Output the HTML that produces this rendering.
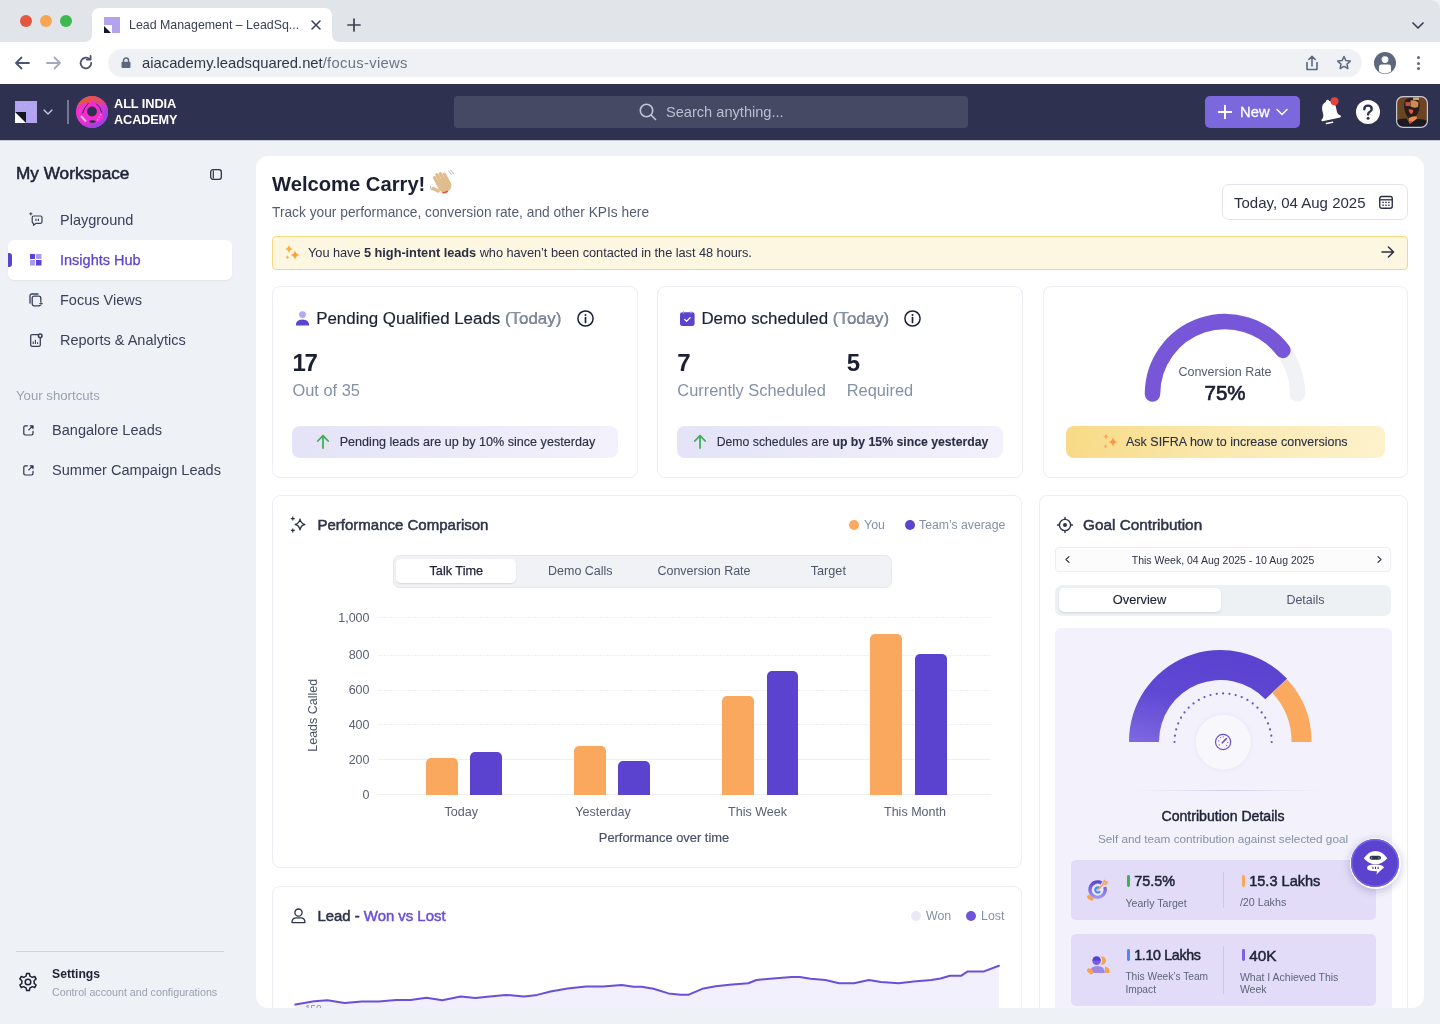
<!DOCTYPE html>
<html><head><meta charset="utf-8">
<style>
*{box-sizing:border-box;margin:0;padding:0}
html,body{width:1440px;height:1024px;overflow:hidden;background:#eef1f5;font-family:"Liberation Sans",sans-serif;color:#1e2235}
.a{position:absolute}
.t{position:absolute;white-space:nowrap;line-height:1}
svg{position:absolute;overflow:visible}
b{font-weight:700}
</style></head><body><div style="position:absolute;left:0;top:0;width:1440px;height:1024px;overflow:hidden;will-change:transform;background:#eef1f5">
<div class="a" style="left:0px;top:0px;width:1440px;height:42px;background:#e1e5ea;border-top-right-radius:9px"></div>
<div class="a" style="left:20px;top:15px;width:12px;height:12px;background:#e4563f;border-radius:50%"></div>
<div class="a" style="left:40px;top:15px;width:12px;height:12px;background:#f6a552;border-radius:50%"></div>
<div class="a" style="left:60px;top:15px;width:12px;height:12px;background:#3eb94f;border-radius:50%"></div>
<svg style="left:84px;top:8px;" width="256" height="34" viewBox="0 0 256 34"><path d="M0 34 Q8 34 8 26 L8 8 Q8 0 16 0 L240 0 Q248 0 248 8 L248 26 Q248 34 256 34 Z" fill="#fff"/></svg>
<svg style="left:104px;top:17px;" width="16" height="16" viewBox="0 0 16 16"><rect x="0" y="0" width="16" height="16" fill="#b3a3ee"/><rect x="0" y="8" width="8" height="8" fill="#fff"/><path d="M0 9 L0 16 L7 16 Z" fill="#141625"/></svg>
<div class="t" style="left:129.0px;top:18.8px;font-size:12.4px;font-weight:400;color:#3b4256;">Lead Management – LeadSq...</div>
<svg style="left:311px;top:20px;" width="10" height="10" viewBox="0 0 10 10"><path d="M1 1 L9 9 M9 1 L1 9" stroke="#3b4256" stroke-width="1.6" stroke-linecap="round"/></svg>
<svg style="left:347px;top:18px;" width="14" height="14" viewBox="0 0 14 14"><path d="M7 1 V13 M1 7 H13" stroke="#3b4256" stroke-width="1.7" stroke-linecap="round"/></svg>
<svg style="left:1412px;top:22px;" width="12" height="8" viewBox="0 0 12 8"><path d="M1 1 L6 6 L11 1" stroke="#3b4256" stroke-width="1.7" fill="none" stroke-linecap="round" stroke-linejoin="round"/></svg>
<div class="a" style="left:0px;top:42px;width:1440px;height:42px;background:#fff"></div>
<svg style="left:14px;top:56px;" width="16" height="14" viewBox="0 0 16 14"><path d="M15 7 H2 M7.5 1.5 L2 7 L7.5 12.5" stroke="#4b5670" stroke-width="1.8" fill="none" stroke-linecap="round" stroke-linejoin="round"/></svg>
<svg style="left:46px;top:56px;" width="16" height="14" viewBox="0 0 16 14"><path d="M1 7 H14 M8.5 1.5 L14 7 L8.5 12.5" stroke="#a3abba" stroke-width="1.8" fill="none" stroke-linecap="round" stroke-linejoin="round"/></svg>
<svg style="left:79px;top:56px;" width="14" height="14" viewBox="0 0 14 14"><path d="M12.2 7 A5.3 5.3 0 1 1 10.6 3.2" stroke="#4b5670" stroke-width="1.8" fill="none" stroke-linecap="round"/><path d="M7.8 3.6 H11.6 V-0.2" stroke="#4b5670" stroke-width="1.8" fill="none" stroke-linecap="round" stroke-linejoin="round"/></svg>
<div class="a" style="left:108px;top:49px;width:1254px;height:28px;background:#eff1f4;border-radius:14px"></div>
<svg style="left:121px;top:57px;" width="10" height="11" viewBox="0 0 10 11"><path d="M2.5 5 V3.5 A2.5 2.5 0 0 1 7.5 3.5 V5" stroke="#5d6880" stroke-width="1.5" fill="none"/><rect x="0.5" y="4.8" width="9" height="6.2" rx="1" fill="#5d6880"/></svg>
<div class="t" style="left:142.0px;top:56.1px;font-size:14.8px;font-weight:400;color:#2f3548;">aiacademy.leadsquared.net<span style="color:#6b7488;letter-spacing:0.3px">/focus-views</span></div>
<svg style="left:1305px;top:55px;" width="14" height="16" viewBox="0 0 14 16"><path d="M7 11 V1.5 M3.8 4.5 L7 1.3 L10.2 4.5" stroke="#5d6880" stroke-width="1.6" fill="none" stroke-linecap="round" stroke-linejoin="round"/><path d="M2 7.5 V14.5 H12 V7.5" stroke="#5d6880" stroke-width="1.6" fill="none" stroke-linecap="round" stroke-linejoin="round"/></svg>
<svg style="left:1336px;top:55px;" width="16" height="16" viewBox="0 0 16 16"><path d="M8 1.5 L9.9 5.6 L14.3 6.1 L11 9.1 L11.9 13.5 L8 11.3 L4.1 13.5 L5 9.1 L1.7 6.1 L6.1 5.6 Z" stroke="#5d6880" stroke-width="1.5" fill="none" stroke-linejoin="round"/></svg>
<svg style="left:1374px;top:52px;" width="22" height="22" viewBox="0 0 22 22"><circle cx="11" cy="11" r="11" fill="#5d6880"/><circle cx="11" cy="7.6" r="3.4" fill="#fff"/><path d="M5 19.5 V15 Q5 12.5 7.5 12.5 H14.5 Q17 12.5 17 15 V19.5 Q14 21.6 11 21.6 Q8 21.6 5 19.5Z" fill="#fff"/></svg>
<div class="a" style="left:1416.5px;top:56.0px;width:3px;height:3px;background:#5d6880;border-radius:50%"></div>
<div class="a" style="left:1416.5px;top:61.5px;width:3px;height:3px;background:#5d6880;border-radius:50%"></div>
<div class="a" style="left:1416.5px;top:67.0px;width:3px;height:3px;background:#5d6880;border-radius:50%"></div>
<div class="a" style="left:0px;top:84px;width:1440px;height:56px;background:#2f3150"></div>
<svg style="left:15px;top:101px;" width="22" height="22" viewBox="0 0 22 22"><rect x="0" y="0" width="22" height="22" fill="#b3a4ef"/><g fill="#d6ccff" opacity=".7"><circle cx="5" cy="4" r=".5"/><circle cx="10" cy="4" r=".5"/><circle cx="16" cy="6" r=".5"/><circle cx="18" cy="12" r=".5"/></g><rect x="0" y="11" width="11" height="11" fill="#fff"/><path d="M0 11 H11 V22 Z" fill="#141625"/></svg>
<svg style="left:43px;top:109px;" width="10" height="6" viewBox="0 0 10 6"><path d="M1 1 L5 5 L9 1" stroke="#c9cce0" stroke-width="1.3" fill="none" stroke-linecap="round" stroke-linejoin="round"/></svg>
<div class="a" style="left:67px;top:100px;width:2px;height:24px;background:#74778f"></div>
<svg style="left:76px;top:96px;" width="32" height="32" viewBox="0 0 32 32"><defs><clipPath id="lc"><circle cx="16" cy="16" r="16"/></clipPath><linearGradient id="lp" x1="0" y1="0" x2="1" y2="1"><stop offset=".3" stop-color="#f22fcf" stop-opacity="0"/><stop offset=".75" stop-color="#a23fe0"/><stop offset="1" stop-color="#7a4ef0"/></linearGradient></defs>
<g clip-path="url(#lc)"><rect width="32" height="32" fill="#f22fcf"/><path d="M0 0 H32 V11 Q24 6 16 7.5 Q8 6 0 11Z" fill="#e1564a"/><rect width="32" height="32" fill="url(#lp)"/>
<path d="M4 22 Q10 8 16 4 Q22 8 28 22 Q22 28 16 26 Q10 28 4 22Z" fill="#f52bd0"/></g>
<path d="M6.3 17.5 Q8.5 11 12.5 7" stroke="#2f3150" stroke-width="1" fill="none"/><path d="M20 7.5 Q24.3 10.5 25.7 16.5" stroke="#2f3150" stroke-width="1" fill="none"/>
<circle cx="16" cy="15.5" r="4.9" fill="#2f3150"/><ellipse cx="16.5" cy="25.6" rx="3.2" ry="1.3" fill="#2f3150"/>
<path d="M5 20 L10 25.5" stroke="#d5d8ee" stroke-width="2" opacity=".8"/><path d="M25 18 L21 25" stroke="#d5d8ee" stroke-width="1.4" opacity=".6" stroke-dasharray="1.5 1.5"/></svg>
<div class="t" style="left:114.0px;top:97.9px;font-size:12.8px;font-weight:700;color:#ffffff;letter-spacing:-0.1px">ALL INDIA</div>
<div class="t" style="left:114.0px;top:114.0px;font-size:12.7px;font-weight:700;color:#ffffff;letter-spacing:-0.1px">ACADEMY</div>
<div class="a" style="left:454px;top:96px;width:514px;height:32px;background:#464963;border-radius:4px"></div>
<svg style="left:639px;top:103px;" width="18" height="18" viewBox="0 0 18 18"><circle cx="7.5" cy="7.5" r="6.2" stroke="#c3c6d6" stroke-width="1.6" fill="none"/><path d="M12 12 L16.5 16.5" stroke="#c3c6d6" stroke-width="1.6" stroke-linecap="round"/></svg>
<div class="t" style="left:666.0px;top:105.0px;font-size:14.6px;font-weight:400;color:#bcbfcf;">Search anything...</div>
<div class="a" style="left:1205px;top:96px;width:95px;height:32px;background:#7b68dd;border-radius:5px"></div>
<svg style="left:1218px;top:105px;" width="14" height="14" viewBox="0 0 14 14"><path d="M7 0.8 V13.2 M0.8 7 H13.2" stroke="#fff" stroke-width="1.9" stroke-linecap="round"/></svg>
<div class="t" style="left:1240.0px;top:105.1px;font-size:14.8px;font-weight:400;color:#ffffff;-webkit-text-stroke:0.3px #fff">New</div>
<svg style="left:1276px;top:108px;" width="12" height="8" viewBox="0 0 12 8"><path d="M1 1.5 L6 6.5 L11 1.5" stroke="#fff" stroke-width="1.5" fill="none" stroke-linecap="round" stroke-linejoin="round"/></svg>
<svg style="left:1317px;top:98px;" width="26" height="28" viewBox="0 0 26 28"><path d="M11 3.2 Q11 1.6 12.6 1.6 Q14.2 1.6 14.2 3.2 Q19.5 4.6 19.6 10.5 V15.8 Q19.8 18.2 22.4 19.8 Q23 21.4 21.6 21.6 L3.6 21.6 Q2.2 21.4 2.8 19.8 Q5.4 18.2 5.6 15.8 V10.5 Q5.7 4.6 11 3.2 Z" fill="#fff" transform="rotate(-12 12.6 13)"/><path d="M9.5 25.5 L15.5 24.3" stroke="#fff" stroke-width="1.6" stroke-linecap="round"/><circle cx="17.5" cy="3.3" r="4" fill="#e0453b"/></svg>
<svg style="left:1356px;top:100px;" width="24" height="24" viewBox="0 0 24 24"><circle cx="12" cy="12" r="12" fill="#fff"/><path d="M8.3 9.2 Q8.3 5.6 12 5.6 Q15.7 5.6 15.7 8.9 Q15.7 11 13.5 12 Q12.1 12.7 12.1 14.4" stroke="#2f3150" stroke-width="2.4" fill="none" stroke-linecap="round"/><circle cx="12.1" cy="18.2" r="1.5" fill="#2f3150"/></svg>
<svg style="left:1396px;top:96px;" width="32" height="32" viewBox="0 0 32 32"><defs><clipPath id="av"><rect x="0" y="0" width="32" height="32" rx="6.5"/></clipPath></defs>
<g clip-path="url(#av)"><rect width="32" height="32" fill="#6b4422"/>
<path d="M8 8 Q9 1.5 15 1.5 Q22 1.5 23.5 7 Q24 14 21 19 L16 24 Q11 22 9.5 17 Q7.5 12 8 8Z" fill="#2a1c18"/>
<path d="M9.5 6 H14 V10 H9.5Z" fill="#d9504a" opacity=".85"/><path d="M14.5 4.5 Q19 3.5 22.5 6.5 L22 11 Q18 12.5 14.5 10.5Z" fill="#eaa05c" opacity=".85"/><path d="M17 1.5 H23 V4 H17Z" fill="#f1c070" opacity=".8"/>
<path d="M12.5 13.5 Q15 12.5 17.5 14.5 L16 18 Q13.5 18 12.5 13.5Z" fill="#de5a43"/>
<path d="M13 22 Q17 19.5 21 20.5 L20.5 25 Q17 28 12.5 27.5Z" fill="#e98e4c"/><path d="M12.5 25 Q15 24 17 26 L14 28Z" fill="#e04b3f"/>
<path d="M0 32 V24.5 Q5 22 10.5 22.5 L14 28 L20.5 23 Q27 22.5 32 25 V32 Z" fill="#1b1a22"/></g>
<rect x=".6" y=".6" width="30.8" height="30.8" rx="6.5" fill="none" stroke="#c6c9d9" stroke-width="1.2"/></svg>
<div class="a" style="left:0px;top:140px;width:1440px;height:1px;background:#c5c9d3"></div>
<div class="t" style="left:16.0px;top:164.9px;font-size:17.2px;font-weight:400;color:#1e2235;-webkit-text-stroke:0.55px #1e2235">My Workspace</div>
<svg style="left:210px;top:168.5px;" width="12" height="11" viewBox="0 0 12 11"><rect x="0.7" y="0.7" width="10.6" height="9.6" rx="2.2" stroke="#2d3348" stroke-width="1.3" fill="none"/><path d="M3.3 1.5 V9.5" stroke="#2d3348" stroke-width="1.2"/></svg>
<div class="a" style="left:8px;top:240px;width:224px;height:40px;background:#fff;border-radius:6px;box-shadow:0 1px 2px rgba(20,30,60,.06)"></div>
<div class="a" style="left:8px;top:253px;width:4px;height:14px;background:#5b43d0;border-radius:0 3px 3px 0"></div>
<svg style="left:29px;top:212px;" width="14" height="14" viewBox="0 0 14 14"><path d="M3.2 5.5 Q3.2 4 4.7 4 H11.6 Q13 4 13 5.5 V9.8 Q13 11.3 11.6 11.3 H7.2 L4.5 13.3 V11.3 Q3.2 11.1 3.2 9.8 Z" stroke="#3a4159" stroke-width="1.2" fill="none" stroke-linejoin="round"/><path d="M7 7 V8.4 M9.4 7 V8.4" stroke="#3a4159" stroke-width="1.2" stroke-linecap="round"/><path d="M1.8 0.3 V3.3 M0.3 1.8 H3.3" stroke="#3a4159" stroke-width="1"/></svg>
<svg style="left:30px;top:254px;" width="12" height="12" viewBox="0 0 12 12"><rect x="0" y="0" width="5" height="5" fill="#5b43d0"/><rect x="6" y="0" width="5.5" height="5" fill="#a99bf0"/><rect x="0" y="6" width="5" height="5.5" fill="#a99bf0"/><rect x="6" y="6" width="5.5" height="5.5" fill="#5b43d0"/></svg>
<svg style="left:29px;top:293px;" width="14" height="14" viewBox="0 0 14 14"><rect x="3.2" y="3.2" width="8.6" height="9.6" rx="2" stroke="#3a4159" stroke-width="1.3" fill="none"/><path d="M1 10 V3 Q1 1 3 1 H9" stroke="#3a4159" stroke-width="1.3" fill="none" stroke-linecap="round"/><circle cx="12" cy="10.5" r="1.8" fill="#eef1f5"/><path d="M12 8.8 V12.2 M10.3 10.5 H13.7" stroke="#3a4159" stroke-width=".9"/></svg>
<svg style="left:30px;top:333px;" width="13" height="14" viewBox="0 0 13 14"><rect x="0.7" y="1.7" width="9.6" height="11.6" rx="1.4" stroke="#3a4159" stroke-width="1.3" fill="none"/><path d="M3.2 11 V8.4 M5.4 11 V6.8 M7.6 11 V9.2" stroke="#3a4159" stroke-width="1.1"/><circle cx="10.2" cy="2.8" r="2.6" fill="#3a4159"/><circle cx="10.2" cy="2.8" r="1.1" fill="#eef1f5"/></svg>
<div class="t" style="left:60.0px;top:213.2px;font-size:14.5px;font-weight:400;color:#3a4159;">Playground</div>
<div class="t" style="left:60.0px;top:253.2px;font-size:14.5px;font-weight:400;color:#5b43d0;-webkit-text-stroke:0.25px #5b43d0">Insights Hub</div>
<div class="t" style="left:60.0px;top:293.2px;font-size:14.5px;font-weight:400;color:#3a4159;">Focus Views</div>
<div class="t" style="left:60.0px;top:333.2px;font-size:14.5px;font-weight:400;color:#3a4159;">Reports &amp; Analytics</div>
<div class="t" style="left:16.0px;top:388.9px;font-size:13.2px;font-weight:400;color:#9aa1b1;">Your shortcuts</div>
<svg style="left:23px;top:425px;" width="11" height="11" viewBox="0 0 11 11"><path d="M4.4 0.8 H2.2 Q0.8 0.8 0.8 2.2 V8.6 Q0.8 10 2.2 10 H8.6 Q10 10 10 8.6 V6.4" stroke="#2d3348" stroke-width="1.2" fill="none" stroke-linecap="round"/><path d="M5.8 4.9 L9.8 0.9 M7.2 0.8 H10 V3.6" stroke="#2d3348" stroke-width="1.2" fill="none" stroke-linecap="round" stroke-linejoin="round"/></svg>
<svg style="left:23px;top:465px;" width="11" height="11" viewBox="0 0 11 11"><path d="M4.4 0.8 H2.2 Q0.8 0.8 0.8 2.2 V8.6 Q0.8 10 2.2 10 H8.6 Q10 10 10 8.6 V6.4" stroke="#2d3348" stroke-width="1.2" fill="none" stroke-linecap="round"/><path d="M5.8 4.9 L9.8 0.9 M7.2 0.8 H10 V3.6" stroke="#2d3348" stroke-width="1.2" fill="none" stroke-linecap="round" stroke-linejoin="round"/></svg>
<div class="t" style="left:52.0px;top:423.2px;font-size:14.55px;font-weight:400;color:#3a4159;">Bangalore Leads</div>
<div class="t" style="left:52.0px;top:463.2px;font-size:14.55px;font-weight:400;color:#3a4159;">Summer Campaign Leads</div>
<div class="a" style="left:16px;top:951px;width:208px;height:1px;background:#cfd3dc"></div>
<svg style="left:18px;top:972px;" width="20" height="20" viewBox="0 0 20 20"><path d="M8.6 1.5 H11.4 L11.9 4.1 Q13.2 4.6 14.2 5.4 L16.7 4.5 L18.1 6.9 L16.1 8.7 Q16.3 10 16.1 11.3 L18.1 13.1 L16.7 15.5 L14.2 14.6 Q13.2 15.4 11.9 15.9 L11.4 18.5 H8.6 L8.1 15.9 Q6.8 15.4 5.8 14.6 L3.3 15.5 L1.9 13.1 L3.9 11.3 Q3.7 10 3.9 8.7 L1.9 6.9 L3.3 4.5 L5.8 5.4 Q6.8 4.6 8.1 4.1 Z" stroke="#1e2235" stroke-width="1.5" fill="none" stroke-linejoin="round"/><circle cx="10" cy="10" r="2.8" stroke="#1e2235" stroke-width="1.5" fill="none"/></svg>
<div class="t" style="left:52.0px;top:967.9px;font-size:12.2px;font-weight:700;color:#1e2235;">Settings</div>
<div class="t" style="left:52.0px;top:987.1px;font-size:10.7px;font-weight:400;color:#9aa1b1;">Control account and configurations</div>
<div class="a" style="left:0;top:0;width:1440px;height:1008px;overflow:hidden">
<div class="a" style="left:256px;top:156px;width:1168px;height:852px;background:#fff;border-radius:12px"></div>
<div class="t" style="left:272.0px;top:173.7px;font-size:20.2px;font-weight:700;color:#1a1f33;">Welcome Carry!</div>
<svg style="left:429px;top:170px;" width="26" height="26" viewBox="0 0 26 26"><g transform="rotate(-28 13 13)" fill="#dfbd8c">
<rect x="7.2" y="3.2" width="3.4" height="11" rx="1.7"/><rect x="10.7" y="1.6" width="3.4" height="12" rx="1.7"/><rect x="14.2" y="2.4" width="3.4" height="11.5" rx="1.7"/><rect x="17.6" y="4.6" width="3.2" height="10" rx="1.6"/>
<rect x="7.2" y="9" width="13.6" height="14" rx="6"/><rect x="2.6" y="11.5" width="3.4" height="9" rx="1.7" transform="rotate(-35 4.3 16)"/></g>
<path d="M14 22.6 Q16.5 23 18.3 21.4" stroke="#e2533d" stroke-width="1.6" fill="none" stroke-linecap="round"/>
<path d="M19.5 1.2 Q21.6 2.2 22.2 4.4 M21.4 0.2 Q24 1.6 24.6 4" stroke="#9aa3b8" stroke-width=".8" fill="none"/><path d="M1.2 16 Q1.4 18.6 3.2 20.2" stroke="#9aa3b8" stroke-width=".8" fill="none"/></svg>
<div class="t" style="left:272.0px;top:205.6px;font-size:13.75px;font-weight:400;color:#535d72;">Track your performance, conversion rate, and other KPIs here</div>
<div class="a" style="left:1222px;top:184px;width:186px;height:36px;border:1px solid #e1e4ea;border-radius:7px;background:#fff"></div>
<div class="t" style="left:1234.0px;top:195.0px;font-size:15px;font-weight:400;color:#2a2f45;">Today, 04 Aug 2025</div>
<svg style="left:1379px;top:195px;" width="14" height="14" viewBox="0 0 14 14"><rect x="0.75" y="1.5" width="12.5" height="11.75" rx="2" stroke="#2a2f45" stroke-width="1.4" fill="none"/><path d="M1 4.8 H13" stroke="#2a2f45" stroke-width="1.3"/><g fill="#2a2f45"><rect x="3.4" y="6.7" width="1.4" height="1.4"/><rect x="6.3" y="6.7" width="1.4" height="1.4"/><rect x="9.2" y="6.7" width="1.4" height="1.4"/><rect x="3.4" y="9.5" width="1.4" height="1.4"/><rect x="6.3" y="9.5" width="1.4" height="1.4"/><rect x="9.2" y="9.5" width="1.4" height="1.4"/></g></svg>
<div class="a" style="left:272px;top:236px;width:1136px;height:34px;background:#fdf6e1;border:1px solid #f4d87f;border-radius:4px"></div>
<svg style="left:283px;top:243px;" width="18" height="18" viewBox="0 0 18 18"><path d="M6 1.5 Q6.6 5.2 10 6 Q6.6 6.8 6 10.5 Q5.4 6.8 2 6 Q5.4 5.2 6 1.5Z" fill="#f7b23b"/><path d="M12 7 Q12.7 11.3 16.8 12 Q12.7 12.7 12 17 Q11.3 12.7 7.2 12 Q11.3 11.3 12 7Z" fill="#f9a33a"/><path d="M4.5 12 Q4.8 13.9 6.5 14.2 Q4.8 14.5 4.5 16.4 Q4.2 14.5 2.5 14.2 Q4.2 13.9 4.5 12Z" fill="#f9b548"/></svg>
<div class="t" style="left:308.0px;top:247.0px;font-size:12.8px;font-weight:400;color:#2a2f45;letter-spacing:-0.05px">You have <b>5 high-intent leads</b> who haven’t been contacted in the last 48 hours.</div>
<svg style="left:1381px;top:246px;" width="14" height="12" viewBox="0 0 14 12"><path d="M1 6 H12.5 M7.5 1 L12.5 6 L7.5 11" stroke="#2a2f45" stroke-width="1.5" fill="none" stroke-linecap="round" stroke-linejoin="round"/></svg>
<div class="a" style="left:272px;top:286px;width:365.5px;height:191.5px;border:1px solid #eceef3;border-radius:8px;background:#fff"></div>
<div class="a" style="left:657.2px;top:286px;width:365.5px;height:191.5px;border:1px solid #eceef3;border-radius:8px;background:#fff"></div>
<div class="a" style="left:1042.5px;top:286px;width:365.5px;height:191.5px;border:1px solid #eceef3;border-radius:8px;background:#fff"></div>
<svg style="left:295px;top:311px;" width="15" height="15" viewBox="0 0 15 15"><circle cx="7.5" cy="3.6" r="3.4" fill="#b5a8f1"/><path d="M0.8 14.6 Q0.8 8.4 7.5 8.4 Q14.2 8.4 14.2 14.6 Z" fill="#5b43d0"/></svg>
<div class="t" style="left:316.2px;top:310.8px;font-size:16.9px;font-weight:400;color:#1e2235;-webkit-text-stroke:0.2px #1e2235">Pending Qualified Leads <span style="color:#8391a7">(Today)</span></div>
<svg style="left:576.5px;top:309.5px;" width="17" height="17" viewBox="0 0 17 17"><circle cx="8.5" cy="8.5" r="7.6" stroke="#1e2235" stroke-width="1.5" fill="none"/><path d="M8.5 7.6 V12.4" stroke="#1e2235" stroke-width="1.7" stroke-linecap="round"/><circle cx="8.5" cy="5" r="1" fill="#1e2235"/></svg>
<div class="t" style="left:292.5px;top:350.5px;font-size:24px;font-weight:700;color:#1a1f33;letter-spacing:-1.4px">17</div>
<div class="t" style="left:292.5px;top:382.1px;font-size:16.4px;font-weight:400;color:#8391a7;">Out of 35</div>
<div class="a" style="left:292px;top:426px;width:326px;height:32px;background:linear-gradient(90deg,#e4e3f7,#f3f1fc);border-radius:8px"></div>
<svg style="left:316px;top:434px;" width="14" height="15" viewBox="0 0 14 15"><path d="M7 14 V2 M1.8 7 L7 1.6 L12.2 7" stroke="#3fae5c" stroke-width="1.8" fill="none" stroke-linecap="round" stroke-linejoin="round"/></svg>
<div class="t" style="left:339.7px;top:435.5px;font-size:12.6px;font-weight:400;color:#2a2f45;-webkit-text-stroke:0.15px #2a2f45">Pending leads are up by 10% since yesterday</div>
<svg style="left:680px;top:311px;" width="15" height="15" viewBox="0 0 15 15"><rect x="0" y="1.2" width="14.6" height="13.8" rx="2.2" fill="#5b43d0"/><path d="M3.5 0.3 V2.5 M11 0.3 V2.5" stroke="#a99bf0" stroke-width="1.2"/><path d="M4.6 8.4 L6.6 10.3 L10.2 6.6" stroke="#fff" stroke-width="1.3" fill="none" stroke-linecap="round" stroke-linejoin="round"/></svg>
<div class="t" style="left:701.4px;top:310.8px;font-size:16.9px;font-weight:400;color:#1e2235;-webkit-text-stroke:0.2px #1e2235">Demo scheduled <span style="color:#8391a7">(Today)</span></div>
<svg style="left:904px;top:309.5px;" width="17" height="17" viewBox="0 0 17 17"><circle cx="8.5" cy="8.5" r="7.6" stroke="#1e2235" stroke-width="1.5" fill="none"/><path d="M8.5 7.6 V12.4" stroke="#1e2235" stroke-width="1.7" stroke-linecap="round"/><circle cx="8.5" cy="5" r="1" fill="#1e2235"/></svg>
<div class="t" style="left:677.3px;top:350.5px;font-size:24px;font-weight:700;color:#1a1f33;">7</div>
<div class="t" style="left:846.7px;top:350.5px;font-size:24px;font-weight:700;color:#1a1f33;">5</div>
<div class="t" style="left:677.3px;top:382.1px;font-size:16.4px;font-weight:400;color:#8391a7;">Currently Scheduled</div>
<div class="t" style="left:846.7px;top:382.1px;font-size:16.4px;font-weight:400;color:#8391a7;">Required</div>
<div class="a" style="left:677px;top:426px;width:326px;height:32px;background:linear-gradient(90deg,#e4e3f7,#f3f1fc);border-radius:8px"></div>
<svg style="left:693px;top:434px;" width="14" height="15" viewBox="0 0 14 15"><path d="M7 14 V2 M1.8 7 L7 1.6 L12.2 7" stroke="#3fae5c" stroke-width="1.8" fill="none" stroke-linecap="round" stroke-linejoin="round"/></svg>
<div class="t" style="left:716.7px;top:435.7px;font-size:12.25px;font-weight:400;color:#2a2f45;-webkit-text-stroke:0.1px #2a2f45">Demo schedules are <b>up by 15% since yesterday</b></div>
<svg style="left:1140px;top:306px;" width="170" height="100" viewBox="0 0 170 100"><path d="M12.5 88 A72.5 72.5 0 0 1 157.5 88" stroke="#f1f2f4" stroke-width="15.5" fill="none" stroke-linecap="round"/><path d="M12.5 88 A72.5 72.5 0 0 1 142.9 44.4" stroke="#7856d8" stroke-width="15.5" fill="none" stroke-linecap="round"/></svg>
<div class="t" style="left:925.0px;width:600px;text-align:center;top:365.8px;font-size:12.5px;font-weight:400;color:#555e72;">Conversion Rate</div>
<div class="t" style="left:925.0px;width:600px;text-align:center;top:383.1px;font-size:20.5px;font-weight:400;color:#1a1f33;-webkit-text-stroke:0.7px #1a1f33">75%</div>
<div class="a" style="left:1066px;top:426px;width:319px;height:32px;background:linear-gradient(100deg,#f7da85 0%,#fbe9b0 50%,#fdf2cd 100%);border-radius:8px"></div>
<svg style="left:1101px;top:432px;" width="18" height="18" viewBox="0 0 18 18"><path d="M12 5 Q12.7 9.3 16.8 10 Q12.7 10.7 12 15 Q11.3 10.7 7.2 10 Q11.3 9.3 12 5Z" fill="#f59a4a"/><path d="M5 1.5 Q5.4 4.2 8 4.6 Q5.4 5 5 7.7 Q4.6 5 2 4.6 Q4.6 4.2 5 1.5Z" fill="#f8ab5c"/><path d="M4.5 12 Q4.8 13.9 6.5 14.2 Q4.8 14.5 4.5 16.4 Q4.2 14.5 2.5 14.2 Q4.2 13.9 4.5 12Z" fill="#f8ab5c"/></svg>
<div class="t" style="left:1126.0px;top:435.6px;font-size:12.5px;font-weight:400;color:#2a2f45;-webkit-text-stroke:0.1px #2a2f45">Ask SIFRA how to increase conversions</div>
<div class="a" style="left:272px;top:495px;width:750px;height:373px;border:1px solid #eceef3;border-radius:8px;background:#fff"></div>
<svg style="left:290px;top:516px;" width="17" height="17" viewBox="0 0 17 17"><path d="M10 3.2 Q10.8 7.6 14.8 8.5 Q10.8 9.4 10 13.8 Q9.2 9.4 5.2 8.5 Q9.2 7.6 10 3.2Z" stroke="#2d3348" stroke-width="1.3" fill="none" stroke-linejoin="round"/><path d="M2.8 0.6 V4.6 M0.8 2.6 H4.8 M2.8 12.4 V16.4 M0.8 14.4 H4.8" stroke="#2d3348" stroke-width="1.2"/></svg>
<div class="t" style="left:317.5px;top:516.9px;font-size:15px;font-weight:400;color:#2d3348;-webkit-text-stroke:0.5px #2d3348">Performance Comparison</div>
<div class="a" style="left:849px;top:519.5px;width:10px;height:10px;background:#fba85f;border-radius:50%"></div>
<div class="t" style="left:864.0px;top:518.8px;font-size:12.4px;font-weight:400;color:#8391a7;">You</div>
<div class="a" style="left:904.5px;top:519.5px;width:10px;height:10px;background:#5b43d0;border-radius:50%"></div>
<div class="t" style="left:919.0px;top:518.9px;font-size:12.25px;font-weight:400;color:#8391a7;">Team’s average</div>
<div class="a" style="left:393px;top:555px;width:499px;height:33px;background:#f0f2f5;border:1px solid #e4e7ec;border-radius:7px"></div>
<div class="a" style="left:396.3px;top:558.5px;width:120.2px;height:24.6px;background:#fff;border-radius:5px;box-shadow:0 1px 1.5px rgba(20,30,60,.12)"></div>
<div class="t" style="left:156.3px;width:600px;text-align:center;top:565.1px;font-size:12.7px;font-weight:400;color:#1e2235;-webkit-text-stroke:0.25px #1e2235">Talk Time</div>
<div class="t" style="left:280.3px;width:600px;text-align:center;top:565.2px;font-size:12.5px;font-weight:400;color:#4d566b;">Demo Calls</div>
<div class="t" style="left:404.0px;width:600px;text-align:center;top:565.2px;font-size:12.5px;font-weight:400;color:#4d566b;">Conversion Rate</div>
<div class="t" style="left:528.3px;width:600px;text-align:center;top:565.1px;font-size:12.7px;font-weight:400;color:#4d566b;">Target</div>
<div class="a" style="left:378px;top:617.4px;width:613px;height:1px;background:repeating-linear-gradient(90deg,#eceef2 0 2px,transparent 2px 3px)"></div>
<div class="t" style="left:-230.5px;width:600px;text-align:right;top:612.0px;font-size:12.5px;font-weight:400;color:#596174;">1,000</div>
<div class="a" style="left:378px;top:654.8px;width:613px;height:1px;background:repeating-linear-gradient(90deg,#eceef2 0 2px,transparent 2px 3px)"></div>
<div class="t" style="left:-230.5px;width:600px;text-align:right;top:649.4px;font-size:12.5px;font-weight:400;color:#596174;">800</div>
<div class="a" style="left:378px;top:689.6px;width:613px;height:1px;background:repeating-linear-gradient(90deg,#eceef2 0 2px,transparent 2px 3px)"></div>
<div class="t" style="left:-230.5px;width:600px;text-align:right;top:684.2px;font-size:12.5px;font-weight:400;color:#596174;">600</div>
<div class="a" style="left:378px;top:724.2px;width:613px;height:1px;background:repeating-linear-gradient(90deg,#eceef2 0 2px,transparent 2px 3px)"></div>
<div class="t" style="left:-230.5px;width:600px;text-align:right;top:718.9px;font-size:12.5px;font-weight:400;color:#596174;">400</div>
<div class="a" style="left:378px;top:759.1px;width:613px;height:1px;background:#eef0f3"></div>
<div class="t" style="left:-230.5px;width:600px;text-align:right;top:753.8px;font-size:12.5px;font-weight:400;color:#596174;">200</div>
<div class="a" style="left:378px;top:793.9px;width:613px;height:1px;background:#eef0f3"></div>
<div class="t" style="left:-230.5px;width:600px;text-align:right;top:788.5px;font-size:12.5px;font-weight:400;color:#596174;">0</div>
<div class="a" style="left:426.2px;top:758px;width:31.7px;height:36.5px;background:#fba85f;border-radius:5px 5px 0 0"></div>
<div class="a" style="left:470px;top:752px;width:31.7px;height:42.5px;background:#5b43d0;border-radius:5px 5px 0 0"></div>
<div class="a" style="left:574.3px;top:746px;width:31.7px;height:48.5px;background:#fba85f;border-radius:5px 5px 0 0"></div>
<div class="a" style="left:618.2px;top:761px;width:31.7px;height:33.5px;background:#5b43d0;border-radius:5px 5px 0 0"></div>
<div class="a" style="left:722px;top:696px;width:31.7px;height:98.5px;background:#fba85f;border-radius:5px 5px 0 0"></div>
<div class="a" style="left:766.5px;top:671px;width:31.7px;height:123.5px;background:#5b43d0;border-radius:5px 5px 0 0"></div>
<div class="a" style="left:870px;top:634px;width:31.7px;height:160.5px;background:#fba85f;border-radius:5px 5px 0 0"></div>
<div class="a" style="left:915px;top:654px;width:31.7px;height:140.5px;background:#5b43d0;border-radius:5px 5px 0 0"></div>
<div class="t" style="left:12.7px;width:600px;text-align:center;top:709.0px;font-size:12.5px;font-weight:400;color:#4a5368;transform:rotate(-90deg)">Leads Called</div>
<div class="t" style="left:161.3px;width:600px;text-align:center;top:805.5px;font-size:12.55px;font-weight:400;color:#596174;">Today</div>
<div class="t" style="left:303.0px;width:600px;text-align:center;top:805.5px;font-size:12.55px;font-weight:400;color:#596174;">Yesterday</div>
<div class="t" style="left:457.6px;width:600px;text-align:center;top:805.5px;font-size:12.55px;font-weight:400;color:#596174;">This Week</div>
<div class="t" style="left:615.0px;width:600px;text-align:center;top:805.5px;font-size:12.55px;font-weight:400;color:#596174;">This Month</div>
<div class="t" style="left:364.0px;width:600px;text-align:center;top:831.8px;font-size:12.9px;font-weight:400;color:#4a5368;-webkit-text-stroke:0.2px #4a5368">Performance over time</div>
<div class="a" style="left:272px;top:886px;width:750px;height:200px;border:1px solid #eceef3;border-radius:8px;background:#fff"></div>
<svg style="left:291px;top:908px;" width="15" height="16" viewBox="0 0 15 16"><circle cx="7.5" cy="4.6" r="3.6" stroke="#2d3348" stroke-width="1.3" fill="none"/><path d="M1 14.6 Q1 9.8 5.5 9.8 H9.5 Q14 9.8 14 14.6 Z" stroke="#2d3348" stroke-width="1.3" fill="none" stroke-linejoin="round"/></svg>
<div class="t" style="left:317.5px;top:908.8px;font-size:14.9px;font-weight:400;color:#2d3348;-webkit-text-stroke:0.5px #2d3348">Lead - <span style="color:#6a4fd6;-webkit-text-stroke:0.5px #6a4fd6">Won vs Lost</span></div>
<div class="a" style="left:911px;top:911px;width:10px;height:10px;background:#ebe8f8;border-radius:50%"></div>
<div class="t" style="left:926.0px;top:910.1px;font-size:12.4px;font-weight:400;color:#8391a7;">Won</div>
<div class="a" style="left:966px;top:911px;width:10px;height:10px;background:#6e55d8;border-radius:50%"></div>
<div class="t" style="left:981.0px;top:910.1px;font-size:12.4px;font-weight:400;color:#8391a7;">Lost</div>
<svg style="left:272px;top:940px;" width="750" height="80" viewBox="0 0 750 80"><polygon points="23.3,64.6 42.3,61.2 55.5,60.2 72.6,63.0 89.8,61.5 107.0,61.5 124.0,60.0 138.6,60.0 154.4,57.8 170.3,60.2 188.7,56.5 203.3,58.0 217.8,56.5 233.6,54.9 252.0,56.5 265.3,54.9 278.5,51.5 295.6,48.5 314.0,46.4 331.0,46.4 349.7,44.9 361.6,46.7 369.5,46.7 381.5,48.8 396.4,53.4 408.6,54.7 416.8,54.7 430.3,48.8 443.8,46.3 457.4,44.7 476.3,43.3 484.5,40.0 498.0,38.7 519.7,37.1 527.8,37.1 538.6,38.7 553.5,40.0 567.0,43.3 582.0,43.3 596.9,40.0 609.0,42.0 626.7,43.3 641.6,41.4 659.2,40.0 668.6,38.5 678.0,35.8 689.0,35.8 695.7,31.4 712.0,31.4 726.9,25.7 726.9,80 23.3,80" fill="#f3f0fd"/><polyline points="23.3,64.6 42.3,61.2 55.5,60.2 72.6,63.0 89.8,61.5 107.0,61.5 124.0,60.0 138.6,60.0 154.4,57.8 170.3,60.2 188.7,56.5 203.3,58.0 217.8,56.5 233.6,54.9 252.0,56.5 265.3,54.9 278.5,51.5 295.6,48.5 314.0,46.4 331.0,46.4 349.7,44.9 361.6,46.7 369.5,46.7 381.5,48.8 396.4,53.4 408.6,54.7 416.8,54.7 430.3,48.8 443.8,46.3 457.4,44.7 476.3,43.3 484.5,40.0 498.0,38.7 519.7,37.1 527.8,37.1 538.6,38.7 553.5,40.0 567.0,43.3 582.0,43.3 596.9,40.0 609.0,42.0 626.7,43.3 641.6,41.4 659.2,40.0 668.6,38.5 678.0,35.8 689.0,35.8 695.7,31.4 712.0,31.4 726.9,25.7" stroke="#6b4fd8" stroke-width="2" fill="none" stroke-linejoin="round" stroke-linecap="round"/></svg>
<div class="t" style="left:305.0px;top:1005.0px;font-size:10px;font-weight:400;color:#8391a7;">150</div>
<div class="a" style="left:1039.3px;top:495px;width:368.7px;height:600px;border:1px solid #eceef3;border-radius:8px;background:#fff"></div>
<svg style="left:1057px;top:516.5px;" width="16" height="16" viewBox="0 0 16 16"><circle cx="8" cy="8" r="5.6" stroke="#2d3348" stroke-width="1.4" fill="none"/><circle cx="8" cy="8" r="2" fill="#2d3348"/><path d="M8 0.5 V2.4 M8 13.6 V15.5 M0.5 8 H2.4 M13.6 8 H15.5" stroke="#2d3348" stroke-width="1.4" stroke-linecap="round"/></svg>
<div class="t" style="left:1083.1px;top:516.9px;font-size:15.3px;font-weight:400;color:#2d3348;-webkit-text-stroke:0.5px #2d3348">Goal Contribution</div>
<div class="a" style="left:1055.2px;top:547.2px;width:336.2px;height:24.4px;border:1px solid #eceef3;border-radius:4px;background:#fcfcfd"></div>
<svg style="left:1064.5px;top:556px;" width="5" height="7" viewBox="0 0 5 7"><path d="M4 0.6 L1 3.5 L4 6.4" stroke="#2d3348" stroke-width="1.2" fill="none" stroke-linecap="round" stroke-linejoin="round"/></svg>
<svg style="left:1376.5px;top:556px;" width="5" height="7" viewBox="0 0 5 7"><path d="M1 0.6 L4 3.5 L1 6.4" stroke="#2d3348" stroke-width="1.2" fill="none" stroke-linecap="round" stroke-linejoin="round"/></svg>
<div class="t" style="left:923.0px;width:600px;text-align:center;top:554.5px;font-size:10.5px;font-weight:400;color:#2d3348;">This Week, 04 Aug 2025 - 10 Aug 2025</div>
<div class="a" style="left:1055.2px;top:584.6px;width:336.2px;height:31px;background:#eef1f4;border-radius:7px"></div>
<div class="a" style="left:1058.9px;top:587.9px;width:162.1px;height:24.4px;background:#fff;border-radius:5px;box-shadow:0 1px 2px rgba(20,30,60,.14)"></div>
<div class="t" style="left:839.5px;width:600px;text-align:center;top:593.9px;font-size:12.8px;font-weight:400;color:#1e2235;-webkit-text-stroke:0.15px #1e2235">Overview</div>
<div class="t" style="left:1005.5px;width:600px;text-align:center;top:594.0px;font-size:12.5px;font-weight:400;color:#4d566b;">Details</div>
<div class="a" style="left:1055.2px;top:628px;width:336.5px;height:420px;background:#f3f1fc;border-radius:6px"></div>
<svg style="left:1000px;top:600px;" width="400" height="200" viewBox="0 0 400 200"><defs><linearGradient id="gp" x1="0" y1="1" x2="0.35" y2="0"><stop offset="0" stop-color="#7e69e0"/><stop offset=".55" stop-color="#5f48d3"/><stop offset="1" stop-color="#5b43d0"/></linearGradient>
<radialGradient id="gc" cx=".5" cy=".5" r=".5"><stop offset=".78" stop-color="#e9e6f5"/><stop offset="1" stop-color="#f3f1fc" stop-opacity="0"/></radialGradient>
<linearGradient id="gl" x1="0" x2="1"><stop offset="0" stop-color="#dcd8ee" stop-opacity="0"/><stop offset=".5" stop-color="#cfcae6"/><stop offset="1" stop-color="#dcd8ee" stop-opacity="0"/></linearGradient></defs>
<path d="M129.00 142.10 L129.00 141.50 A91.5 91.5 0 0 1 287.09 78.75 L287.09 78.75 L265.26 99.32 L265.26 99.32 A61.5 61.5 0 0 0 159.00 141.50 L159.00 142.10 Z" fill="url(#gp)"/><path d="M286.73 79.09 L286.73 79.09 A91 91 0 0 1 311.50 141.50 L311.50 142.10 L291.50 142.10 L291.50 141.50 A71 71 0 0 0 272.17 92.81 L272.17 92.81 Z" fill="#fca960"/>
<circle cx="174.50" cy="142.00" r="1.1" fill="#6a4fd6"/><circle cx="174.92" cy="135.66" r="1.1" fill="#6a4fd6"/><circle cx="176.16" cy="129.42" r="1.1" fill="#6a4fd6"/><circle cx="178.20" cy="123.40" r="1.1" fill="#6a4fd6"/><circle cx="181.01" cy="117.70" r="1.1" fill="#6a4fd6"/><circle cx="184.54" cy="112.41" r="1.1" fill="#6a4fd6"/><circle cx="188.73" cy="107.63" r="1.1" fill="#6a4fd6"/><circle cx="193.51" cy="103.44" r="1.1" fill="#6a4fd6"/><circle cx="198.80" cy="99.91" r="1.1" fill="#6a4fd6"/><circle cx="204.50" cy="97.10" r="1.1" fill="#6a4fd6"/><circle cx="210.52" cy="95.06" r="1.1" fill="#6a4fd6"/><circle cx="216.76" cy="93.82" r="1.1" fill="#6a4fd6"/><circle cx="223.10" cy="93.40" r="1.1" fill="#6a4fd6"/><circle cx="229.44" cy="93.82" r="1.1" fill="#6a4fd6"/><circle cx="235.68" cy="95.06" r="1.1" fill="#6a4fd6"/><circle cx="241.70" cy="97.10" r="1.1" fill="#6a4fd6"/><circle cx="247.40" cy="99.91" r="1.1" fill="#6a4fd6"/><circle cx="252.69" cy="103.44" r="1.1" fill="#6a4fd6"/><circle cx="257.47" cy="107.63" r="1.1" fill="#6a4fd6"/><circle cx="261.66" cy="112.41" r="1.1" fill="#6a4fd6"/><circle cx="265.19" cy="117.70" r="1.1" fill="#6a4fd6"/><circle cx="268.00" cy="123.40" r="1.1" fill="#6a4fd6"/><circle cx="270.04" cy="129.42" r="1.1" fill="#6a4fd6"/><circle cx="271.28" cy="135.66" r="1.1" fill="#6a4fd6"/><circle cx="271.70" cy="142.00" r="1.1" fill="#6a4fd6"/>
<circle cx="223.3" cy="142.2" r="33" fill="url(#gc)"/><circle cx="223.3" cy="142.2" r="27.5" fill="#f8f7fc"/>
<circle cx="223.1" cy="142" r="7.6" stroke="#6a4fd6" stroke-width="1.2" fill="none"/>
<path d="M222.3 142.8 L226.3 138.6" stroke="#6a4fd6" stroke-width="1.6" stroke-linecap="round"/>
<circle cx="219.29999999999998" cy="144.8" r=".6" fill="#6a4fd6"/><circle cx="218.7" cy="140.8" r=".6" fill="#6a4fd6"/><circle cx="220.7" cy="137.6" r=".6" fill="#6a4fd6"/><circle cx="223.29999999999998" cy="136.8" r=".6" fill="#6a4fd6"/><circle cx="227.7" cy="142.6" r=".6" fill="#6a4fd6"/><circle cx="226.7" cy="145.4" r=".6" fill="#6a4fd6"/>
<rect x="133" y="190" width="190" height="1" fill="url(#gl)"/></svg>
<div class="t" style="left:923.0px;width:600px;text-align:center;top:808.6px;font-size:14.1px;font-weight:400;color:#1e2235;-webkit-text-stroke:0.45px #1e2235">Contribution Details</div>
<div class="t" style="left:923.0px;width:600px;text-align:center;top:832.7px;font-size:11.75px;font-weight:400;color:#8391a7;">Self and team contribution against selected goal</div>
<div class="a" style="left:1071.3px;top:859.8px;width:304.7px;height:60.2px;background:#e2dcf8;border-radius:5px"></div>
<div class="a" style="left:1071.3px;top:934.4px;width:304.7px;height:72px;background:#e2dcf8;border-radius:5px"></div>
<div class="a" style="left:1223.3px;top:872px;width:1px;height:36px;background:#cfc6ef"></div>
<div class="a" style="left:1223.3px;top:946px;width:1px;height:48px;background:#cfc6ef"></div>
<div class="a" style="left:1126.9px;top:875.4px;width:2.7px;height:11.4px;background:#3fae5c;border-radius:1.4px"></div>
<div class="a" style="left:1241.9px;top:875.4px;width:2.7px;height:11.4px;background:#fba85f;border-radius:1.4px"></div>
<div class="a" style="left:1126.9px;top:949.4px;width:2.7px;height:11.4px;background:#4f86f7;border-radius:1.4px"></div>
<div class="a" style="left:1241.9px;top:949.4px;width:2.7px;height:11.4px;background:#7b62df;border-radius:1.4px"></div>
<div class="t" style="left:1134.2px;top:874.3px;font-size:14.4px;font-weight:400;color:#1e2235;-webkit-text-stroke:0.5px #1e2235">75.5%</div>
<div class="t" style="left:1249.2px;top:874.2px;font-size:14.55px;font-weight:400;color:#1e2235;-webkit-text-stroke:0.5px #1e2235">15.3 Lakhs</div>
<div class="t" style="left:1125.4px;top:897.5px;font-size:10.6px;font-weight:400;color:#5d6577;">Yearly Target</div>
<div class="t" style="left:1239.9px;top:897.4px;font-size:10.7px;font-weight:400;color:#5d6577;">/20 Lakhs</div>
<div class="t" style="left:1134.2px;top:948.4px;font-size:14.2px;font-weight:400;color:#1e2235;-webkit-text-stroke:0.5px #1e2235;letter-spacing:-0.3px">1.10 Lakhs</div>
<div class="t" style="left:1249.2px;top:947.9px;font-size:15.3px;font-weight:400;color:#1e2235;-webkit-text-stroke:0.5px #1e2235">40K</div>
<div class="t" style="left:1125.4px;top:972.4px;font-size:10.2px;font-weight:400;color:#5d6577;">This Week’s Team</div>
<div class="t" style="left:1125.4px;top:984.5px;font-size:10.2px;font-weight:400;color:#5d6577;">Impact</div>
<div class="t" style="left:1239.9px;top:972.2px;font-size:10.5px;font-weight:400;color:#5d6577;">What I Achieved This</div>
<div class="t" style="left:1239.9px;top:984.4px;font-size:10.5px;font-weight:400;color:#5d6577;">Week</div>
<svg style="left:1080px;top:870px;" width="40" height="40" viewBox="0 0 40 40"><defs><linearGradient id="tg" x1="0" y1="0" x2="0" y2="1"><stop offset="0" stop-color="#5640d0"/><stop offset="1" stop-color="#ad9cee"/></linearGradient></defs>
<path d="M22.2 11.6 A9.3 9.3 0 1 0 26.3 16.5 L23.3 17.6 A6 6 0 1 1 20.6 14.4 Z" fill="url(#tg)"/>
<circle cx="17.6" cy="19.9" r="5.6" fill="#ebe6fb"/>
<path d="M20 18.5 A2.6 2.6 0 1 0 20.1 21.3" stroke="#3d8dff" stroke-width="2.2" fill="none"/>
<path d="M17.6 19.9 L24.5 12.6" stroke="#f8a24f" stroke-width="1.5" stroke-linecap="round"/>
<path d="M22.6 11.6 L24.6 9.6 L26.4 11.4 L28.6 11.2 L26.2 15.2 L23.8 14.6Z" fill="#f8a24f"/><path d="M23.8 12 L25.6 13.6" stroke="#d9d6ef" stroke-width=".9"/>
<ellipse cx="10.3" cy="27.9" rx="3.6" ry="2.1" transform="rotate(35 10.3 27.9)" fill="#f8a24f"/>
<circle cx="28.5" cy="18.4" r="1" fill="#f3eab0"/></svg>
<svg style="left:1080px;top:945px;" width="40" height="40" viewBox="0 0 40 40"><defs><linearGradient id="hg" x1="0" y1="0" x2="0" y2="1"><stop offset=".45" stop-color="#5640d0"/><stop offset=".55" stop-color="#7a5fe0"/></linearGradient></defs>
<path d="M21 11.7 A4.2 4.2 0 0 1 21 19.8 A5.5 5.5 0 0 0 21 11.7Z" fill="#f8a24f"/><path d="M20.8 11.6 Q26 11.6 26 15.7 Q26 19.8 20.8 19.8 Q23.6 15.7 20.8 11.6Z" fill="#f8a24f"/>
<circle cx="16.6" cy="15.6" r="4.3" fill="url(#hg)"/>
<path d="M10 28 Q10 21 17.4 21 Q24.8 21 24.8 28 Z" fill="#9d88ea"/>
<ellipse cx="10.3" cy="26.3" rx="3.6" ry="2.3" transform="rotate(40 10.3 26.3)" fill="#f8a24f"/>
<path d="M25 21.5 Q29.5 22.5 29.5 26 L29.3 28 H25Z" fill="#f8a24f"/>
<path d="M30.5 24.5 L33 21.5 M32.5 25 L34 23" stroke="#f1e7a6" stroke-width="1" stroke-linecap="round"/></svg>
<div class="a" style="left:1349.5px;top:837.5px;width:51px;height:51px;background:#fff;border-radius:50%;box-shadow:0 2px 9px rgba(40,30,90,.25)"></div>
<div class="a" style="left:1351px;top:839px;width:48px;height:48px;background:#5b43d0;border-radius:50%;box-shadow:inset 0 0 0 1.5px #7763e0"></div>
<svg style="left:1360px;top:848px;" width="30" height="30" viewBox="0 0 30 30"><path d="M3.8 10.3 Q9 3 15.5 3 Q22 3 27.3 10.3 Q22 16.3 15.5 16.3 Q9 16.3 3.8 10.3Z" fill="#fff"/><rect x="9.6" y="7.7" width="11.4" height="4.1" rx="2.05" fill="#2d3348"/><rect x="11.2" y="8.6" width=".9" height="2.3" rx=".45" fill="#4cd27a"/><rect x="18.5" y="8.6" width=".9" height="2.3" rx=".45" fill="#4cd27a"/><path d="M7 20 Q7 16.6 15 16.6 Q23 16.6 24 19.5 L20 23 L16.5 26.4 L17 23.2 Q7 23.2 7 20Z" fill="#fff"/><g fill="#2d3348"><rect x="12.4" y="18.8" width="1" height="2.2"/><rect x="15" y="18.8" width="1" height="2.2"/><rect x="17.6" y="18.8" width="1" height="2.2"/></g></svg>
</div>
</div></body></html>
